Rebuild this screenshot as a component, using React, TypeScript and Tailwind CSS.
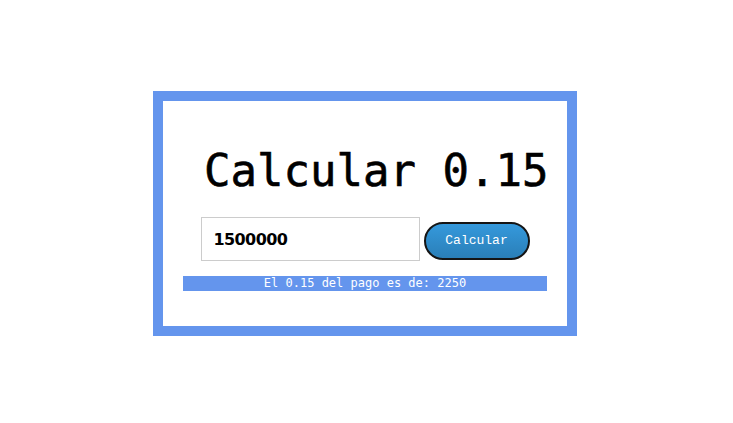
import { useState } from "react"

const App = () => {
  const [pago, setPago] = useState("1500000")
  const [resultado, setResultado] = useState(2250)

  const calcular = () => {
    setResultado(Number(pago) * 0.0015)
  }

  return (
    <div className="min-h-[423px] bg-white pt-[91px]">
      <div className="ml-[153px] w-[424px] border-[10px] border-[#6495ed] bg-white pt-[46px] pb-[35px]">
        <h1 className="pl-[41px] text-[44px] leading-[48px] text-black font-['DejaVu_Sans_Mono',monospace] [-webkit-text-stroke:0.6px_black]">
          Calcular 0.15
        </h1>

        <div className="mt-[22px] flex items-end justify-center gap-[4px]">
          <input
            value={pago}
            onChange={(e) => setPago(e.target.value)}
            className="h-[44px] w-[219px] border border-[#cccccc] bg-white px-[12px] text-[16px] font-bold tracking-[-0.6px] text-black outline-none font-['DejaVu_Sans',sans-serif]"
          />
          <button
            onClick={calcular}
            className="mb-[1px] h-[38px] w-[106px] rounded-full border-2 border-[#151515] bg-linear-to-b from-[#3599dc] to-[#2a7fb8] text-[13px] text-white font-['Liberation_Mono',monospace]"
          >
            Calcular
          </button>
        </div>

        <div className="mx-[20px] mt-[15px] h-[15px] bg-[#6495ed] text-center text-[12px] leading-[15px] text-white font-['DejaVu_Sans_Mono',monospace]">
          El 0.15 del pago es de: {resultado}
        </div>
      </div>
    </div>
  )
}

export default App
